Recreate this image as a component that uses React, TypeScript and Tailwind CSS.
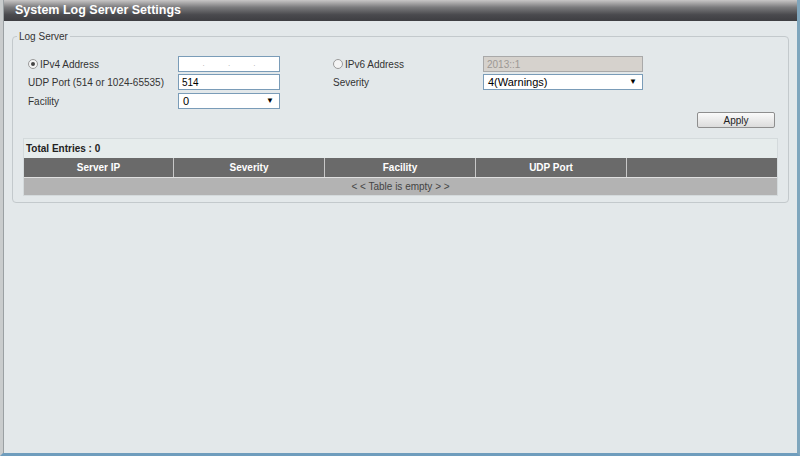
import React from 'react';

const columns = ['Server IP', 'Severity', 'Facility', 'UDP Port', ''];

function Radio({ checked }: { checked?: boolean }) {
  return (
    <span className="flex h-[10px] w-[10px] items-center justify-center rounded-full border border-[#9a9a9a] bg-[#f4f4f4]">
      {checked && <span className="h-[4px] w-[4px] rounded-full bg-[#444]" />}
    </span>
  );
}

function Select({ value, width }: { value: string; width: string }) {
  return (
    <div className={`flex h-[16px] items-center justify-between border border-[#7a9cb8] bg-white pl-[4px] pr-[5px] text-[11px] text-black ${width}`}>
      <span>{value}</span>
      <span className="text-[8px] leading-none">▼</span>
    </div>
  );
}

export default function App() {
  return (
    <div
      className="flex h-[456px] w-[800px] flex-col overflow-hidden bg-[#e3e8ea] text-[10px] text-[#333]"
      style={{ fontFamily: '"Liberation Sans", Arial, sans-serif' }}
    >
      <div className="flex h-full border-l-[3px] border-l-[#c9cccd] border-r-[3px] border-r-[#7fa6bd] border-b-[3px] border-b-[#6f9dbd]">
        <div className="flex flex-1 flex-col border-l border-l-[#9aa0a3]">
          {/* Title */}
          <div className="flex h-[21px] items-center bg-[linear-gradient(#c8c6c6,#7a7a7c_35%,#4a4a4e_70%,#3e3e42)] pl-[11px]">
            <span className="text-[12.5px] font-bold leading-none text-white">System Log Server Settings</span>
          </div>

          <div className="px-[8px] pt-[8px]">
            <fieldset className="h-[174px] rounded-[4px] border border-[#c3c9cc] px-[10px] pb-0">
              <legend className="ml-[-6px] px-[2px] text-[10px] text-[#333]">Log Server</legend>

              <div className="mt-[12px] grid grid-cols-[150px_155px_150px_160px] gap-y-[2px] pl-[5px]">
                <div className="flex h-[16px] items-center gap-[2px]">
                  <Radio checked />
                  <span>IPv4 Address</span>
                </div>
                <div className="flex h-[16px] w-[102px] items-center justify-around border border-[#7a9cb8] bg-white px-[12px] text-[8px] text-[#aaa]">
                  <span>.</span><span>.</span><span>.</span>
                </div>
                <div className="flex h-[16px] items-center gap-[2px]">
                  <Radio />
                  <span>IPv6 Address</span>
                </div>
                <div className="flex h-[16px] w-[160px] items-center border border-[#a9a9a9] bg-[#d6d2cd] pl-[3px] text-[#9c9894]">2013::1</div>

                <div className="flex h-[16px] items-center whitespace-nowrap">UDP Port (514 or 1024-65535)</div>
                <div className="flex h-[16px] w-[102px] items-center border border-[#7a9cb8] bg-white pl-[3px] text-black">514</div>
                <div className="flex h-[16px] items-center">Severity</div>
                <Select value="4(Warnings)" width="w-[160px]" />

                <div className="mt-[1px] flex h-[16px] items-center">Facility</div>
                <div className="mt-[1px]">
                  <Select value="0" width="w-[102px]" />
                </div>
              </div>

              <div className="mt-[3px] flex justify-end pr-[3px]">
                <button className="h-[16px] w-[78px] rounded-[2px] border border-[#8e8e8e] bg-[linear-gradient(#fafafa,#dcdcdc)] text-[10px] text-[#222]">
                  Apply
                </button>
              </div>

              <div className="mt-[10px] w-[755px] border border-[#d4dadc]">
                <div className="flex h-[19px] items-center bg-[#e6ecec] pl-[2px] font-bold text-[#222]">Total Entries : 0</div>
                <div className="grid h-[19px] grid-cols-[150px_151px_151px_151px_1fr] bg-[#6a6a6a]">
                  {columns.map((c, i) => (
                    <div
                      key={i}
                      className={`flex items-center justify-center font-bold text-white ${i < 4 ? 'border-r border-r-[#c8c8c8]' : ''}`}
                    >
                      {c}
                    </div>
                  ))}
                </div>
                <div className="flex h-[18px] items-center justify-center border-t border-t-[#e0e0e0] bg-[#b3b3b3] text-[#444]">
                  &lt; &lt; Table is empty &gt; &gt;
                </div>
              </div>
            </fieldset>
          </div>
        </div>
      </div>
    </div>
  );
}
